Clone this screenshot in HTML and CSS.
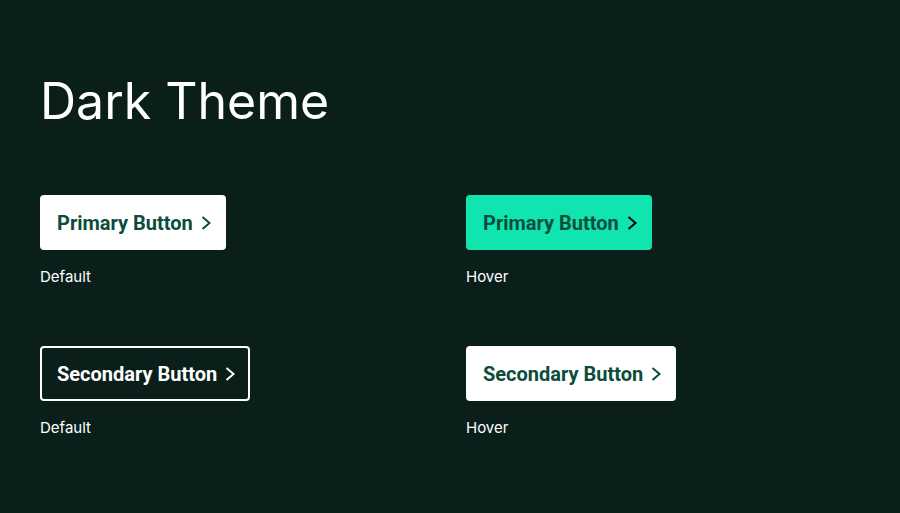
FILE: index.html
```html
<!DOCTYPE html>
<html lang="en">
<head>
    <meta charset="UTF-8">
    <meta name="viewport" content="width=device-width, initial-scale=1.0">
    <title>Buttons - Dark Theme</title>
    <link rel="stylesheet" href="styles.css">
</head>
<body>
    <div class="page">
        <h1>Dark Theme</h1>
        <div class="grid">
            <div class="item">
                <button class="btn primary">Primary Button <svg class="chev" viewBox="0 0 10 14"><path d="M1.5 1l7 6-7 6"/></svg></button>
                <span class="label">Default</span>
            </div>
            <div class="item">
                <button class="btn primary hover">Primary Button <svg class="chev" viewBox="0 0 10 14"><path d="M1.5 1l7 6-7 6"/></svg></button>
                <span class="label">Hover</span>
            </div>
            <div class="item">
                <button class="btn secondary">Secondary Button <svg class="chev" viewBox="0 0 10 14"><path d="M1.5 1l7 6-7 6"/></svg></button>
                <span class="label">Default</span>
            </div>
            <div class="item">
                <button class="btn secondary hover">Secondary Button <svg class="chev" viewBox="0 0 10 14"><path d="M1.5 1l7 6-7 6"/></svg></button>
                <span class="label">Hover</span>
            </div>
        </div>
    </div>
</body>
</html>
```

FILE: styles.css
```css
body {
    margin: 0;
    padding: 0;
    background-color: #0b1f1a;
    font-family: Inter, "Liberation Sans", sans-serif;
    color: #fff;
}

.page {
    padding: 70px 40px 0;
}

h1 {
    margin: 0 0 63px;
    font-size: 50px;
    font-weight: 400;
    line-height: 62px;
}

.grid {
    display: grid;
    grid-template-columns: 426px 1fr;
    row-gap: 59px;
}

.item {
    display: flex;
    flex-direction: column;
    align-items: flex-start;
    gap: 17px;
}

.btn {
    display: flex;
    align-items: center;
    gap: 8px;
    height: 55px;
    padding: 0 13px 0 15px;
    border: 2px solid transparent;
    border-radius: 4px;
    font-family: Roboto, "Liberation Sans", sans-serif;
    font-weight: 700;
    font-size: 20px;
    cursor: pointer;
}

.chev {
    width: 10px;
    height: 14px;
    fill: none;
    stroke: currentColor;
    stroke-width: 2;
}

.primary {
    background-color: #fff;
    color: #0b4d3c;
}

.primary.hover {
    background-color: #10e5b0;
}

.primary.hover .chev {
    stroke: #000;
}

.secondary {
    background-color: transparent;
    border-color: #fff;
    color: #fff;
}

.secondary.hover {
    background-color: #fff;
    color: #0b4d3c;
}

.label {
    font-size: 15px;
    line-height: 20px;
}
```
